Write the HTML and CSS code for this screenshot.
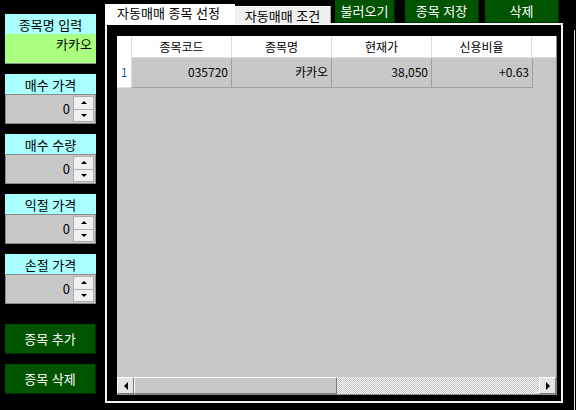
FILE: index.html
```html
<!DOCTYPE html>
<html lang="ko">
<head>
<meta charset="utf-8">
<link rel="stylesheet" href="styles.css">
</head>
<body>
<div class="app">
  <div class="left">
    <div class="field">
      <div class="label">종목명 입력</div>
      <div class="input">카카오</div>
    </div>
    <div class="field">
      <div class="label">매수 가격</div>
      <div class="spin"><span class="val">0</span><div class="arrows"><div class="ab"><span class="up"></span></div><div class="ab"><span class="down"></span></div></div></div>
    </div>
    <div class="field">
      <div class="label">매수 수량</div>
      <div class="spin"><span class="val">0</span><div class="arrows"><div class="ab"><span class="up"></span></div><div class="ab"><span class="down"></span></div></div></div>
    </div>
    <div class="field">
      <div class="label">익절 가격</div>
      <div class="spin"><span class="val">0</span><div class="arrows"><div class="ab"><span class="up"></span></div><div class="ab"><span class="down"></span></div></div></div>
    </div>
    <div class="field">
      <div class="label">손절 가격</div>
      <div class="spin"><span class="val">0</span><div class="arrows"><div class="ab"><span class="up"></span></div><div class="ab"><span class="down"></span></div></div></div>
    </div>
    <div class="btn big first">종목 추가</div>
    <div class="btn big">종목 삭제</div>
  </div>
  <div class="right">
    <div class="top">
      <div class="tab active">자동매매 종목 선정</div>
      <div class="tab inactive">자동매매 조건</div>
      <div class="btn small b1">불러오기</div>
      <div class="btn small b2">종목 저장</div>
      <div class="btn small b3">삭제</div>
    </div>
    <div class="pane">
      <div class="grid">
        <div class="row head">
          <div class="rh"></div>
          <div class="c">종목코드</div>
          <div class="c">종목명</div>
          <div class="c">현재가</div>
          <div class="c">신용비율</div>
          <div class="fill"></div>
        </div>
        <div class="row data">
          <div class="rh">1</div>
          <div class="c">035720</div>
          <div class="c">카카오</div>
          <div class="c">38,050</div>
          <div class="c last">+0.63</div>
        </div>
        <div class="space"></div>
        <div class="hscroll">
          <div class="sbtn"><span class="lt"></span></div>
          <div class="thumb"></div>
          <div class="track"></div>
          <div class="sbtn"><span class="rt"></span></div>
        </div>
      </div>
    </div>
  </div>
  <div class="edge"></div>
</div>
</body>
</html>
```
FILE: styles.css
```css
* { box-sizing: border-box; }
html, body { margin: 0; padding: 0; }
body {
  background: #000;
  width: 576px;
  height: 410px;
  overflow: hidden;
  font-family: "Noto Sans CJK KR", "Noto Sans", sans-serif;
  font-size: 12px;
  color: #000;
}
.app { display: flex; height: 410px; }
.left {
  width: 91px;
  margin-left: 5px;
  padding-top: 14px;
  display: flex;
  flex-direction: column;
}
.field { margin-bottom: 10px; }
.label {
  height: 20px;
  background: #aaffff;
  text-align: center;
  line-height: 21px;
  font-size: 13px;
}
.input {
  height: 30px;
  background: #aaff80;
  border-bottom: 1px solid #8c8c8c;
  text-align: right;
  padding: 2px 4px 0 0;
  line-height: 16px;
  font-size: 13px;
}
.spin {
  height: 30px;
  background: #c8c8c8;
  border: 1px solid #8a8a8a;
  display: flex;
  align-items: center;
  justify-content: flex-end;
  padding-right: 1px;
}
.val { font-size: 13px; margin-right: 3px; line-height: 16px; }
.arrows { display: flex; flex-direction: column; width: 21px; height: 26px; }
.ab {
  flex: 1;
  background: #f0f0f0;
  border: 1px solid #adadad;
  display: flex;
  align-items: center;
  justify-content: center;
}
.ab + .ab { border-top: none; }
.up { width: 0; height: 0; border-left: 3px solid transparent; border-right: 3px solid transparent; border-bottom: 3px solid #000; }
.down { width: 0; height: 0; border-left: 3px solid transparent; border-right: 3px solid transparent; border-top: 3px solid #000; }

.btn {
  background: #005400;
  color: #fff;
  text-align: center;
  border-right: 1px solid #002a00;
  border-bottom: 1px solid #002a00;
}
.btn.big { height: 30px; line-height: 29px; font-size: 13px; margin-bottom: 10px; }
.btn.big.first { margin-top: 10px; }

.right { margin-left: 9px; display: flex; flex-direction: column; width: 458px; }
.top { display: flex; align-items: flex-start; height: 23px; position: relative; z-index: 2; }
.tab { font-size: 13px; }
.tab.active {
  margin-top: 4px;
  width: 130px;
  height: 21px;
  background: #fff;
  padding-left: 12px;
  line-height: 18px;
  white-space: nowrap;
}
.tab.inactive {
  margin-top: 6px;
  width: 96px;
  height: 17px;
  background: #f0f0f0;
  border-top: 1px solid #fff;
  border-right: 1px solid #a0a0a0;
  text-align: center;
  line-height: 17px;
  white-space: nowrap;
}
.btn.small { height: 23px; line-height: 21px; font-size: 13px; }
.b1 { width: 60px; margin-left: 4px; }
.b2 { width: 74px; margin-left: 10px; }
.b3 { width: 74px; margin-left: 6px; }

.pane {
  width: 458px;
  height: 380px;
  border: 2px solid #f4f4f4;
  padding: 11px 4px 6px 10px;
}
.grid {
  width: 440px;
  height: 359px;
  background: #c8c8c8;
  border-right: 1px solid #8a8a8a;
  border-bottom: 1px solid #8a8a8a;
  display: flex;
  flex-direction: column;
}
.row { display: flex; }
.row.head { height: 22px; background: #fff; }
.row.head .c { text-align: center; line-height: 21px; border-right: 1px solid #dcdcdc; border-bottom: 1px solid #dcdcdc; }
.row .rh { width: 15px; background: #fff; border-right: 1px solid #dcdcdc; color: #1060c0; text-align: center; }
.row .c { width: 100px; }
.row .fill { flex: 1; border-bottom: 1px solid #dcdcdc; }
.row.data { height: 30px; }
.row.data .rh { line-height: 28px; border-bottom: 1px solid #dcdcdc; }
.row.data .c {
  text-align: right;
  padding-right: 3px;
  line-height: 28px;
  border-right: 1px solid #a0a0a0;
  border-bottom: 1px solid #a0a0a0;
}
.row.data .c.last { width: 101px; }
.space { flex: 1; }
.hscroll { height: 17px; display: flex; }
.sbtn {
  width: 17px;
  height: 17px;
  background: #e4e4e4;
  border-top: 1px solid #fff;
  border-left: 1px solid #fff;
  border-right: 1px solid #7a7a7a;
  border-bottom: 1px solid #7a7a7a;
  display: flex;
  align-items: center;
  justify-content: center;
}
.lt { width: 0; height: 0; border-top: 4px solid transparent; border-bottom: 4px solid transparent; border-right: 4px solid #000; }
.rt { width: 0; height: 0; border-top: 4px solid transparent; border-bottom: 4px solid transparent; border-left: 4px solid #000; }
.thumb {
  width: 203px;
  background: #c8c8c8;
  border-top: 1px solid #fff;
  border-left: 1px solid #fff;
  border-right: 1px solid #7a7a7a;
  border-bottom: 1px solid #7a7a7a;
}
.track {
  flex: 1;
  background-color: #fff;
  background-image: repeating-conic-gradient(#c0c0c0 0 25%, #fff 0 50%);
  background-size: 2px 2px;
}
.edge { width: 1px; height: 380px; margin-top: 30px; margin-left: 11px; background: #e8e8e8; }
```
